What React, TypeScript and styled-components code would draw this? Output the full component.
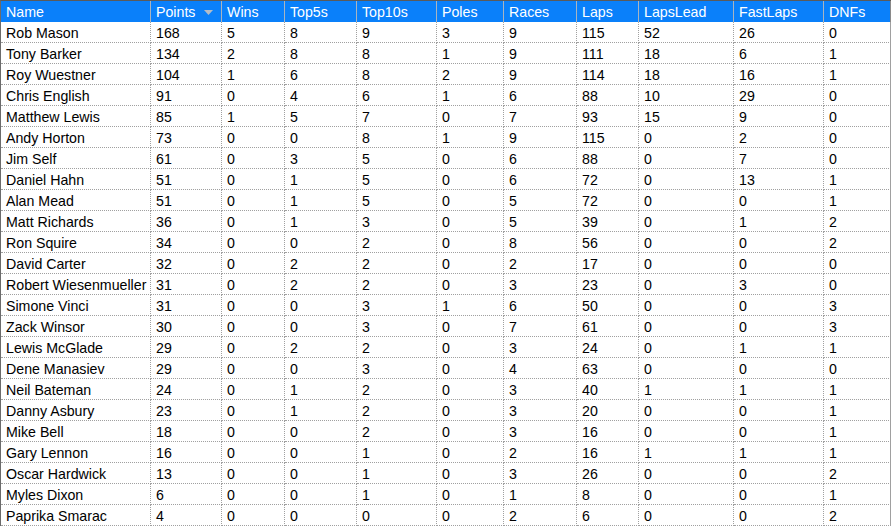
import React from "react";
import styled, { createGlobalStyle } from "styled-components";

const Global = createGlobalStyle`
  html, body { margin: 0; padding: 0; background: #ffffff; }
  body { font-family: "Liberation Sans", Arial, sans-serif; }
`;

const WIDTHS = [150, 71, 63, 72, 80, 67, 73, 62, 95, 90, 67];
const COLS = WIDTHS.map((w) => `${w}px`).join(" ");

const HEADERS = ["Name", "Points", "Wins", "Top5s", "Top10s", "Poles", "Races", "Laps", "LapsLead", "FastLaps", "DNFs"];

const ROWS: (string | number)[][] = [
  ["Rob Mason", 168, 5, 8, 9, 3, 9, 115, 52, 26, 0],
  ["Tony Barker", 134, 2, 8, 8, 1, 9, 111, 18, 6, 1],
  ["Roy Wuestner", 104, 1, 6, 8, 2, 9, 114, 18, 16, 1],
  ["Chris English", 91, 0, 4, 6, 1, 6, 88, 10, 29, 0],
  ["Matthew Lewis", 85, 1, 5, 7, 0, 7, 93, 15, 9, 0],
  ["Andy Horton", 73, 0, 0, 8, 1, 9, 115, 0, 2, 0],
  ["Jim Self", 61, 0, 3, 5, 0, 6, 88, 0, 7, 0],
  ["Daniel Hahn", 51, 0, 1, 5, 0, 6, 72, 0, 13, 1],
  ["Alan Mead", 51, 0, 1, 5, 0, 5, 72, 0, 0, 1],
  ["Matt Richards", 36, 0, 1, 3, 0, 5, 39, 0, 1, 2],
  ["Ron Squire", 34, 0, 0, 2, 0, 8, 56, 0, 0, 2],
  ["David Carter", 32, 0, 2, 2, 0, 2, 17, 0, 0, 0],
  ["Robert Wiesenmueller", 31, 0, 2, 2, 0, 3, 23, 0, 3, 0],
  ["Simone Vinci", 31, 0, 0, 3, 1, 6, 50, 0, 0, 3],
  ["Zack Winsor", 30, 0, 0, 3, 0, 7, 61, 0, 0, 3],
  ["Lewis McGlade", 29, 0, 2, 2, 0, 3, 24, 0, 1, 1],
  ["Dene Manasiev", 29, 0, 0, 3, 0, 4, 63, 0, 0, 0],
  ["Neil Bateman", 24, 0, 1, 2, 0, 3, 40, 1, 1, 1],
  ["Danny Asbury", 23, 0, 1, 2, 0, 3, 20, 0, 0, 1],
  ["Mike Bell", 18, 0, 0, 2, 0, 3, 16, 0, 0, 1],
  ["Gary Lennon", 16, 0, 0, 1, 0, 2, 16, 1, 1, 1],
  ["Oscar Hardwick", 13, 0, 0, 1, 0, 3, 26, 0, 0, 2],
  ["Myles Dixon", 6, 0, 0, 1, 0, 1, 8, 0, 0, 1],
  ["Paprika Smarac", 4, 0, 0, 0, 0, 2, 6, 0, 0, 2],
];

const Grid = styled.div`
  width: 890px;
  border-left: 1px solid #6b6b6b;
  border-top: 1px solid #5a5a5a;
  font-size: 14.2px;
  color: #000;
`;

const HeaderRow = styled.div`
  display: grid;
  grid-template-columns: ${COLS};
  height: 21px;
  background: #0a80fa;
`;

const HeaderCell = styled.div<{ $last?: boolean }>`
  position: relative;
  box-sizing: border-box;
  height: 21px;
  padding-left: 5px;
  line-height: 23px;
  color: #ffffff;
  border-right: 1px solid ${(p) => (p.$last ? "#8a8a8a" : "#a9b4c0")};
  white-space: nowrap;
  overflow: hidden;
`;

const SortArrow = styled.svg`
  position: absolute;
  right: 8px;
  top: 9px;
`;

const Row = styled.div`
  display: grid;
  grid-template-columns: ${COLS};
  height: 21px;
`;

const Cell = styled.div<{ $last?: boolean }>`
  box-sizing: border-box;
  height: 21px;
  padding-left: 5px;
  line-height: 23px;
  border-right: 1px ${(p) => (p.$last ? "solid #a0a0a0" : "dotted #a0a0a0")};
  border-bottom: 1px dotted #a0a0a0;
  white-space: nowrap;
  overflow: hidden;
`;

export default function App() {
  return (
    <>
      <Global />
      <Grid>
        <HeaderRow>
          {HEADERS.map((h, i) => (
            <HeaderCell key={h} $last={i === HEADERS.length - 1}>
              {h}
              {h === "Points" && (
                <SortArrow width="9" height="5" viewBox="0 0 9 5">
                  <polygon points="0,0 9,0 4.5,5" fill="#b4bcc6" />
                </SortArrow>
              )}
            </HeaderCell>
          ))}
        </HeaderRow>
        {ROWS.map((r) => (
          <Row key={r[0] as string}>
            {r.map((v, i) => (
              <Cell key={i} $last={i === r.length - 1}>
                {v}
              </Cell>
            ))}
          </Row>
        ))}
      </Grid>
    </>
  );
}
